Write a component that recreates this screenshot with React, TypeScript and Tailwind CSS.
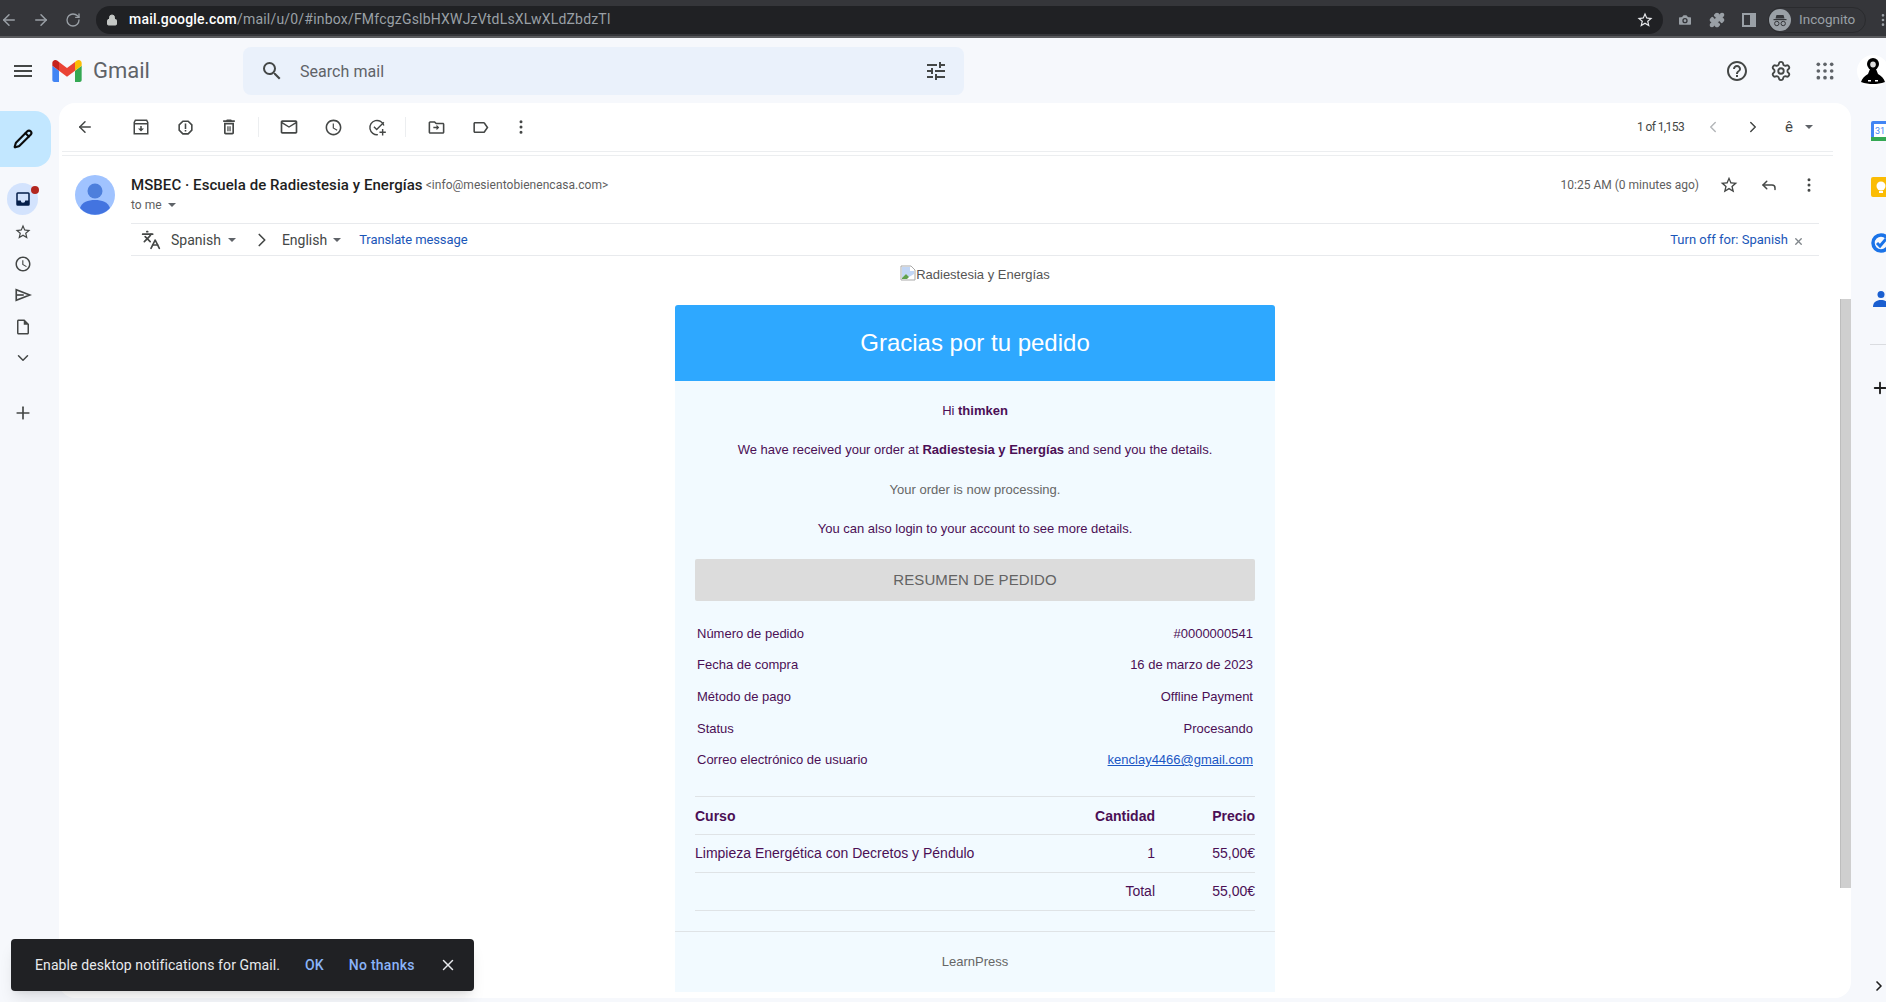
import React from 'react';
import {
  ArrowLeft,
  ArrowRight,
  Camera,
  ChevronDown,
  ChevronLeft,
  ChevronRight,
  EllipsisVertical,
  Languages,
  Lock,
  Pencil,
  Plus,
  Puzzle,
  Reply,
  RotateCw,
  Settings,
  X,
} from 'lucide-react';

const SENDER_FONT = "font-['Roboto',sans-serif]";
const MAIL_FONT = "font-['Liberation_Sans',Arial,sans-serif]";

// Material outline icons used by the Gmail toolbar
const ICONS = {
  trash: 'M6 19c0 1.1.9 2 2 2h8c1.1 0 2-.9 2-2V7H6v12zM8 9h8v10H8V9zm7.5-5l-1-1h-5l-1 1H5v2h14V4zM10 11h1.5v6H10zM12.5 11H14v6h-1.5z',
  mail: 'M20 4H4c-1.1 0-2 .9-2 2v12c0 1.1.9 2 2 2h16c1.1 0 2-.9 2-2V6c0-1.1-.9-2-2-2zm0 14H4V8l8 5 8-5v10zm-8-7L4 6h16l-8 5z',
  clock: 'M11.99 2C6.47 2 2 6.48 2 12s4.47 10 9.99 10C17.52 22 22 17.52 22 12S17.52 2 11.99 2zM12 20c-4.42 0-8-3.58-8-8s3.58-8 8-8 8 3.58 8 8-3.58 8-8 8zm.5-13H11v6l5.25 3.15.75-1.23-4.5-2.67z',
  report: 'M15.73 3H8.27L3 8.27v7.46L8.27 21h7.46L21 15.73V8.27L15.73 3zM19 14.9L14.9 19H9.1L5 14.9V9.1L9.1 5h5.8L19 9.1v5.8zM11 7h2v7h-2zM11 15h2v2h-2z',
  folder: 'M20 6h-8l-2-2H4c-1.1 0-1.99.9-1.99 2L2 18c0 1.1.9 2 2 2h16c1.1 0 2-.9 2-2V8c0-1.1-.9-2-2-2zm0 12H4V6h5.17l2 2H20v10zM12 11H8v2h4v2.5l3.5-3.5L12 8.5z',
  label: 'M17.63 5.84C17.27 5.33 16.67 5 16 5L5 5.01C3.9 5.01 3 5.9 3 7v10c0 1.1.9 1.99 2 1.99L16 19c.67 0 1.27-.33 1.63-.84L22 12l-4.37-6.16zM16 17H5V7h11l3.55 5L16 17z',
  star: 'M22 9.24l-7.19-.62L12 2 9.19 8.63 2 9.24l5.46 4.73L5.82 21 12 17.27 18.18 21l-1.63-7.03L22 9.24zM12 15.4l-3.76 2.27 1-4.28-3.32-2.88 4.38-.38L12 6.1l1.71 4.04 4.38.38-3.32 2.88 1 4.28L12 15.4z',
  draft: 'M14 2H6c-1.1 0-2 .9-2 2v16c0 1.1.9 2 2 2h12c1.1 0 2-.9 2-2V8l-6-6zM6 20V4h7v5h5v11H6z',
};

function Caret({ className = '' }: { className?: string }) {
  return <span className={`inline-block w-0 h-0 border-x-[4px] border-x-transparent border-t-[4px] border-t-[#5f6368] ${className}`} />;
}

function Material({ d, size = 24, className = '' }: { d: string; size?: number; className?: string }) {
  return (
    <svg width={size} height={size} viewBox="0 0 24 24" fill="currentColor" className={`shrink-0 ${className}`}>
      <path d={d} />
    </svg>
  );
}

function GmailLogo() {
  return (
    <svg width="30" height="22" viewBox="52 42 88 66">
      <path fill="#4285f4" d="M58 108h14V74L52 59v43c0 3.32 2.69 6 6 6" />
      <path fill="#34a853" d="M120 108h14c3.32 0 6-2.69 6-6V59l-20 15" />
      <path fill="#fbbc04" d="M120 48v26l20-15v-8c0-7.42-8.47-11.65-14.4-7.2" />
      <path fill="#ea4335" d="M72 74V48l24 18 24-18v26L96 92" />
      <path fill="#c5221f" d="M52 51v8l20 15V48l-5.6-4.2c-5.94-4.45-14.4-.22-14.4 7.2" />
    </svg>
  );
}

function AppsGrid() {
  const dots = [4, 12, 20];
  return (
    <svg width="20" height="20" viewBox="0 0 24 24" fill="#5f6368">
      {dots.map((y) => dots.map((x) => <circle key={`${x}-${y}`} cx={x} cy={y} r="2.2" />))}
    </svg>
  );
}

function ArchiveIcon() {
  return (
    <svg width="18" height="18" viewBox="0 0 24 24">
      <path d="M4.5 3h15L21 6v15H3V6z" fill="none" stroke="#444746" strokeWidth="2" />
      <path d="M3 7.5h18" stroke="#444746" strokeWidth="2" />
      <path d="M11 10.5h2V14h3l-4 4-4-4h3z" fill="#444746" />
    </svg>
  );
}

function AddTaskIcon() {
  return (
    <svg width="19" height="19" viewBox="0 0 24 24" fill="none" stroke="#444746" strokeWidth="1.8">
      <path d="M20 9.5A9 9 0 1 0 12.5 21" />
      <path d="m7.5 11 3.5 3.5L20 5.5" />
      <path d="M18.5 14v8M14.5 18h8" />
    </svg>
  );
}

function SendIcon() {
  return (
    <svg width="18" height="18" viewBox="0 0 24 24" fill="none" stroke="#444746" strokeWidth="2.2">
      <path d="M3 5v14l18-7z" />
      <path d="M3 12h10" />
    </svg>
  );
}

function InboxIcon() {
  return (
    <svg width="18" height="18" viewBox="0 0 24 24" fill="#041e49">
      <path d="M19 3H5a2 2 0 0 0-2 2v14a2 2 0 0 0 2 2h14a2 2 0 0 0 2-2V5a2 2 0 0 0-2-2zm0 11h-4a3 3 0 0 1-6 0H5V5h14z" />
    </svg>
  );
}

function IncognitoIcon() {
  return (
    <svg width="22" height="22" viewBox="0 0 22 22">
      <circle cx="11" cy="11" r="11" fill="#9aa0a6" />
      <path d="M7.5 6h7l1 3.5h-9z" fill="#35363a" />
      <path d="M4.5 10h13v1.2h-13z" fill="#35363a" />
      <circle cx="7.8" cy="14.5" r="2.2" fill="none" stroke="#35363a" strokeWidth="1" />
      <circle cx="14.2" cy="14.5" r="2.2" fill="none" stroke="#35363a" strokeWidth="1" />
    </svg>
  );
}

function AccountAvatar() {
  return (
    <div className="w-8 h-8 rounded-full bg-white flex items-center justify-center shrink-0">
      <svg width="26" height="28" viewBox="0 0 26 28">
        <circle cx="13" cy="7" r="6" fill="#000" />
        <ellipse cx="13" cy="7.5" rx="2.8" ry="3" fill="#ddd" />
        <path d="M10 12h6l2 5c3 1.5 6 4.500 7 8-4 1.500-8 2-12 2s-8-.5-12-2c1-3.500 4-6.500 7-8z" fill="#000" />
        <path d="M8 23h3v1.500H8zM15 23h3v1.500h-3z" fill="#fff" />
      </svg>
    </div>
  );
}

function PersonAvatar() {
  return (
    <svg width="40" height="40" viewBox="0 0 40 40" className="shrink-0">
      <circle cx="20" cy="20" r="20" fill="#a0c3ff" />
      <circle cx="20" cy="16" r="7.5" fill="#4d7fdc" />
      <path d="M5 33c2-6 8-8 15-8s13 2 15 8a20 20 0 0 1-30 0z" fill="#4374e0" />
    </svg>
  );
}

function BrokenImage() {
  return (
    <svg width="16" height="16" viewBox="0 0 16 16" className="shrink-0">
      <path d="M1 1h10l4 4v10H1z" fill="#fff" stroke="#a9a9a9" />
      <path d="M2 2h8v4h4v3L9 12 6 9l-4 4z" fill="#c2d6f5" />
      <path d="M2 14v-1l4-4 3 3-2 2z" fill="#5fa04e" />
    </svg>
  );
}

function ToolbarButton({ children, className = '' }: { children: React.ReactNode; className?: string }) {
  return <div className={`w-[44px] h-full flex items-center justify-center text-[#444746] ${className}`}>{children}</div>;
}

function BrowserBar() {
  return (
    <div className="h-[38px] pt-[3px] bg-[#35363a] border-b-2 border-[#5a5b5e] flex items-center text-[#9aa0a6] shrink-0">
      <ArrowLeft size={18} className="ml-0 shrink-0" />
      <ArrowRight size={18} className="ml-[14px] shrink-0" />
      <RotateCw size={16} className="ml-[15px] shrink-0" />
      <div className="ml-[15px] w-[1567px] h-[28px] rounded-full bg-[#202124] flex items-center shrink-0">
        <Lock size={12} className="ml-[10px] text-[#c4c7c5] fill-[#c4c7c5]" />
        <div className={`ml-[11px] text-[14px] tracking-[0.2px] ${SENDER_FONT}`}>
          <span className="text-white font-medium">mail.google.com</span>
          <span>/mail/u/0/#inbox/FMfcgzGslbHXWJzVtdLsXLwXLdZbdzTl</span>
        </div>
        <Material d={ICONS.star} size={18} className="ml-auto mr-[9px] text-[#e8eaed]" />
      </div>
      <Camera size={16} className="ml-[14px] fill-[#9aa0a6] text-[#35363a] shrink-0" />
      <Puzzle size={16} className="ml-[16px] fill-[#9aa0a6] shrink-0" />
      <div className="ml-[17px] w-[14px] h-[14px] border-2 border-[#9aa0a6] border-r-[6px] shrink-0" />
      <div className="ml-[12px] w-[98px] h-[26px] rounded-full border border-[#2a2b2e] flex items-center shrink-0">
        <IncognitoIcon />
        <span className={`ml-[8px] text-[13.5px] ${SENDER_FONT}`}>Incognito</span>
      </div>
      <EllipsisVertical size={16} className="ml-[9px] shrink-0" />
    </div>
  );
}

function GmailHeader() {
  return (
    <div className="h-[65px] flex items-center shrink-0 text-[#5f6368]">
      <Material d="M3 18h18v-2H3v2zm0-5h18v-2H3v2zm0-7v2h18V6H3z" size={24} className="ml-[11px] text-[#444746]" />
      <div className="ml-[17px] shrink-0">
        <GmailLogo />
      </div>
      <span className={`ml-[11px] text-[22px] text-[#5f6368] shrink-0 ${SENDER_FONT}`}>Gmail</span>
      <div className="ml-[93px] w-[721px] h-[48px] rounded-lg bg-[#eaf1fb] flex items-center shrink-0">
        <Material
          d="M15.5 14h-.79l-.28-.27A6.471 6.471 0 0 0 16 9.5 6.5 6.5 0 1 0 9.5 16c1.61 0 3.09-.59 4.23-1.57l.27.28v.79l5 4.99L20.49 19l-4.99-5zm-6 0C7.01 14 5 11.99 5 9.5S7.01 5 9.5 5 14 7.01 14 9.5 11.99 14 9.5 14z"
          size={24}
          className="ml-[17px] text-[#444746]"
        />
        <span className={`ml-[16px] mt-[2px] text-[16px] tracking-[0.05px] text-[#5f6368] ${SENDER_FONT}`}>Search mail</span>
        <Material
          d="M3 17v2h6v-2H3zM3 5v2h10V5H3zm10 16v-2h8v-2h-8v-2h-2v6h2zM7 9v2H3v2h4v2h2V9H7zm14 4v-2H11v2h10zm-6-4h2V7h4V5h-4V3h-2v6z"
          size={24}
          className="ml-auto mr-[16px] text-[#444746]"
        />
      </div>
      <Material
        d="M11 18h2v-2h-2v2zm1-16C6.48 2 2 6.48 2 12s4.48 10 10 10 10-4.48 10-10S17.52 2 12 2zm0 18c-4.41 0-8-3.59-8-8s3.59-8 8-8 8 3.59 8 8-3.59 8-8 8zm0-14c-2.21 0-4 1.79-4 4h2c0-1.1.9-2 2-2s2 .9 2 2c0 2-3 1.75-3 5h2c0-2.25 3-2.5 3-5 0-2.21-1.79-4-4-4z"
        size={24}
        className="ml-[761px] text-[#444746]"
      />
      <Settings size={22} className="ml-[21px] text-[#444746] shrink-0" />
      <div className="ml-[23px] shrink-0">
        <AppsGrid />
      </div>
      <div className="ml-[22px] shrink-0">
        <AccountAvatar />
      </div>
    </div>
  );
}

function Sidebar() {
  return (
    <div className="w-[59px] shrink-0 flex flex-col text-[#444746]">
      <div className="mt-[8px] w-[51px] h-[56px] bg-[#c2e7ff] rounded-r-2xl flex items-center justify-center text-[#0b0b0b]">
        <Pencil size={20} strokeWidth={2.5} className="-ml-[6px]" />
      </div>
      <div className="mt-[16px] ml-[7px] relative w-[31px] h-[32px] rounded-full bg-[#d3e3fd] flex items-center justify-center">
        <InboxIcon />
        <span className="absolute top-[3px] right-[-1px] w-2 h-2 rounded-full bg-[#b3261e]" />
      </div>
      <div className="mt-[8px] ml-[14px] flex flex-col items-start gap-[13.6px]">
        <Material d={ICONS.star} size={18} />
        <Material d={ICONS.clock} size={18} />
        <SendIcon />
        <Material d={ICONS.draft} size={18} />
        <ChevronDown size={18} />
      </div>
      <Plus size={20} className="mt-[36px] ml-[13px]" />
    </div>
  );
}

function Toolbar() {
  return (
    <div className="h-[48px] flex items-center shrink-0">
      <ToolbarButton className="ml-[4px]">
        <ArrowLeft size={18} />
      </ToolbarButton>
      <ToolbarButton className="ml-[12px]">
        <ArchiveIcon />
      </ToolbarButton>
      <ToolbarButton>
        <Material d={ICONS.report} size={19} />
      </ToolbarButton>
      <ToolbarButton>
        <Material d={ICONS.trash} size={20} />
      </ToolbarButton>
      <div className="w-px h-[20px] bg-[#eceef0] ml-[7px]" />
      <ToolbarButton className="ml-[8px]">
        <Material d={ICONS.mail} size={20} />
      </ToolbarButton>
      <ToolbarButton>
        <Material d={ICONS.clock} size={19} />
      </ToolbarButton>
      <ToolbarButton>
        <AddTaskIcon />
      </ToolbarButton>
      <div className="w-px h-[20px] bg-[#eceef0] ml-[6px]" />
      <ToolbarButton className="ml-[8px]">
        <Material d={ICONS.folder} size={19} />
      </ToolbarButton>
      <ToolbarButton>
        <Material d={ICONS.label} size={19} />
      </ToolbarButton>
      <ToolbarButton className="-ml-[3px]">
        <EllipsisVertical size={18} />
      </ToolbarButton>
      <span className={`ml-auto text-[12px] tracking-[-0.6px] text-[#444746] ${SENDER_FONT}`}>1 of 1,153</span>
      <ChevronLeft size={18} className="ml-[20px] text-[#b4b7ba]" />
      <ChevronRight size={18} className="ml-[22px] text-[#444746]" />
      <span className={`ml-[23px] text-[15px] leading-none text-[#444746] ${SENDER_FONT}`}>ê</span>
      <Caret className="ml-[12px] mr-[38px]" />
    </div>
  );
}

function MessageHeader() {
  return (
    <div className="h-[67px] flex items-start">
      <div className="flex-1 pt-[20px]">
        <div className="h-[18px] flex items-center">
          <span className={`text-[15px] font-medium text-[#1f1f1f] tracking-[0.06px] ${SENDER_FONT}`}>MSBEC · Escuela de Radiestesia y Energías</span>
          <span className={`ml-[3px] text-[12px] text-[#5e5e5e] tracking-[0.05px] ${SENDER_FONT}`}>&lt;info@mesientobienencasa.com&gt;</span>
        </div>
        <div className="mt-[1px] h-[20px] flex items-center">
          <span className={`text-[12px] text-[#5e5e5e] ${SENDER_FONT}`}>to me</span>
          <Caret className="ml-[6px]" />
        </div>
      </div>
      <div className="pt-[20px] h-[38px] flex items-center text-[#444746]">
        <span className={`text-[12px] text-[#5e5e5e] ${SENDER_FONT}`}>10:25 AM (0 minutes ago)</span>
        <Material d={ICONS.star} size={20} className="ml-[20px]" />
        <Reply size={18} className="ml-[21px]" />
        <EllipsisVertical size={18} className="ml-[22px] mr-[1px]" />
      </div>
    </div>
  );
}

function TranslateBar() {
  return (
    <div className={`h-[33px] pt-[1px] border-y border-[#e8eaed] flex items-center text-[#444746] ${SENDER_FONT}`}>
      <Languages size={20} className="ml-[10px]" />
      <span className="ml-[10px] text-[14px]">Spanish</span>
      <Caret className="ml-[7px]" />
      <ChevronRight size={22} strokeWidth={1.8} className="ml-[15px]" />
      <span className="ml-[9px] text-[14px]">English</span>
      <Caret className="ml-[6px]" />
      <span className="ml-[18px] text-[13px] tracking-[-0.1px] text-[#1a56b8]">Translate message</span>
      <span className="ml-auto text-[13px] text-[#1a56b8]">Turn off for: Spanish</span>
      <X size={11} strokeWidth={3} className="ml-[5px] mr-[15px] mt-[2px] text-[#80868b]" />
    </div>
  );
}

const SUMMARY_ROWS = [
  ['Número de pedido', '#0000000541'],
  ['Fecha de compra', '16 de marzo de 2023'],
  ['Método de pago', 'Offline Payment'],
  ['Status', 'Procesando'],
];

function OrderCard() {
  return (
    <div className={`w-[600px] mx-auto text-[#4b0f55] ${MAIL_FONT}`}>
      <div className="h-[76px] bg-[#2ea8ff] rounded-t-[3px] flex items-center justify-center text-[24px] text-white">Gracias por tu pedido</div>
      <div className="bg-[#f2faff] min-h-[611px] text-[13px]">
        <div className="flex flex-col items-center pt-[20px] gap-[19.4px] leading-[20px]">
          <p>
            Hi <strong>thimken</strong>
          </p>
          <p>
            We have received your order at <strong>Radiestesia y Energías</strong> and send you the details.
          </p>
          <p className="text-[#666]">Your order is now processing.</p>
          <p>You can also login to your account to see more details.</p>
        </div>
        <div className="mx-[20px] mt-[20px] h-[42px] rounded-[2px] bg-[#dcdcdc] flex items-center justify-center text-[15px] tracking-[0.1px] text-[#636363]">RESUMEN DE PEDIDO</div>
        <div className="mx-[22px] mt-[16.5px]">
          {SUMMARY_ROWS.map(([label, value]) => (
            <div key={label} className="h-[31.6px] flex items-center justify-between">
              <span>{label}</span>
              <span>{value}</span>
            </div>
          ))}
          <div className="h-[31.6px] flex items-center justify-between">
            <span>Correo electrónico de usuario</span>
            <span className="text-[#1a56c4] underline">kenclay4466@gmail.com</span>
          </div>
        </div>
        <div className="mx-[20px] mt-[20.5px] border-t border-[#dfe3e6] text-[14px]">
          <div className="h-[38px] pt-[1px] flex items-center border-b border-[#dfe3e6] font-bold">
            <span className="flex-1">Curso</span>
            <span className="w-[100px] text-right">Cantidad</span>
            <span className="w-[100px] text-right">Precio</span>
          </div>
          <div className="h-[38px] flex items-center border-b border-[#dfe3e6]">
            <span className="flex-1">Limpieza Energética con Decretos y Péndulo</span>
            <span className="w-[100px] text-right">1</span>
            <span className="w-[100px] text-right">55,00€</span>
          </div>
          <div className="h-[38px] flex items-center border-b border-[#dfe3e6]">
            <span className="flex-1" />
            <span className="w-[100px] text-right">Total</span>
            <span className="w-[100px] text-right">55,00€</span>
          </div>
        </div>
        <div className="mt-[20px] h-[61px] border-t border-[#dfe3e6] flex items-center justify-center text-[#666]">LearnPress</div>
      </div>
    </div>
  );
}

function MessagePanel() {
  return (
    <div className="flex-1 min-w-0 bg-white rounded-2xl mb-[4px] flex flex-col overflow-hidden">
      <Toolbar />
      <div className="h-[5px] ml-[3px] mr-[18px] border-y border-[#eceef0] shrink-0" />
      <div className="flex-1 min-h-0 flex">
        <div className="flex-1 min-w-0 flex overflow-hidden">
          <div className="ml-[16px] mt-[19px]">
            <PersonAvatar />
          </div>
          <div className="ml-[16px] flex-1 min-w-0 mr-[21px]">
            <MessageHeader />
            <TranslateBar />
            <div className={`h-[49px] flex items-start justify-center pt-[9px] text-[13px] text-[#555] ${MAIL_FONT}`}>
              <BrokenImage />
              <span>Radiestesia y Energías</span>
            </div>
            <OrderCard />
          </div>
        </div>
        <div className="w-[11px] shrink-0">
          <div className="mt-[143px] h-[589px] bg-[#cfcfcf] border-l border-[#bdbdbd]" />
        </div>
      </div>
    </div>
  );
}

function RightRail() {
  return (
    <div className="w-[35px] shrink-0 overflow-hidden flex flex-col">
      <svg width="20" height="20" viewBox="0 0 20 20" className="ml-[20px] mt-[18px] shrink-0">
        <rect width="20" height="20" rx="2" fill="#4285f4" />
        <rect x="3" y="3" width="14" height="13" fill="#fff" />
        <rect y="16" width="20" height="4" fill="#34a853" />
        <rect x="15" y="3" width="5" height="13" fill="#fbbc04" />
        <text x="9" y="13" textAnchor="middle" fontSize="9" fontFamily="Roboto, sans-serif" fill="#4285f4">31</text>
      </svg>
      <svg width="20" height="20" viewBox="0 0 20 20" className="ml-[20px] mt-[36px] shrink-0">
        <rect width="20" height="20" rx="2" fill="#fbbc04" />
        <circle cx="10" cy="9" r="4.5" fill="#fff" />
        <rect x="8" y="14" width="4" height="2" fill="#fff" />
      </svg>
      <svg width="20" height="20" viewBox="0 0 20 20" className="ml-[20px] mt-[36px] shrink-0">
        <circle cx="10" cy="10" r="8" fill="none" stroke="#1a73e8" strokeWidth="3.5" />
        <path d="m6 10 3 3 6-7" fill="none" stroke="#1a73e8" strokeWidth="3" />
      </svg>
      <svg width="20" height="20" viewBox="0 0 20 20" className="ml-[20px] mt-[36px] shrink-0">
        <circle cx="10" cy="5.5" r="3.5" fill="#1a5fd0" />
        <path d="M2 18c0-5 3.5-7 8-7s8 2 8 7z" fill="#1a5fd0" />
      </svg>
      <div className="ml-[19px] mt-[35px] h-px bg-[#dadce0] shrink-0" />
      <Plus size={18} strokeWidth={2.5} className="ml-[20px] mt-[34px] text-[#1f1f1f] shrink-0" />
      <ChevronRight size={16} strokeWidth={2.5} className="ml-[20px] mt-auto mb-[8px] text-[#1f1f1f] shrink-0" />
    </div>
  );
}

export default function App() {
  return (
    <div className="relative w-[1886px] h-[1002px] overflow-hidden bg-[#f6f8fc] flex flex-col">
      <BrowserBar />
      <GmailHeader />
      <div className="flex-1 min-h-0 flex">
        <Sidebar />
        <MessagePanel />
        <RightRail />
      </div>

      {/* notification toast */}
      <div className={`absolute left-[11px] top-[939px] w-[463px] h-[52px] rounded bg-[#202124] shadow-lg flex items-center text-[14px] tracking-[0.1px] ${SENDER_FONT}`}>
        <span className="ml-[24px] text-[#e8eaed]">Enable desktop notifications for Gmail.</span>
        <span className="ml-[25px] font-medium text-[#8ab4f8]">OK</span>
        <span className="ml-[25px] font-medium tracking-[0.25px] text-[#8ab4f8]">No thanks</span>
        <X size={18} className="ml-[24px] text-[#e8eaed]" />
      </div>
    </div>
  );
}
